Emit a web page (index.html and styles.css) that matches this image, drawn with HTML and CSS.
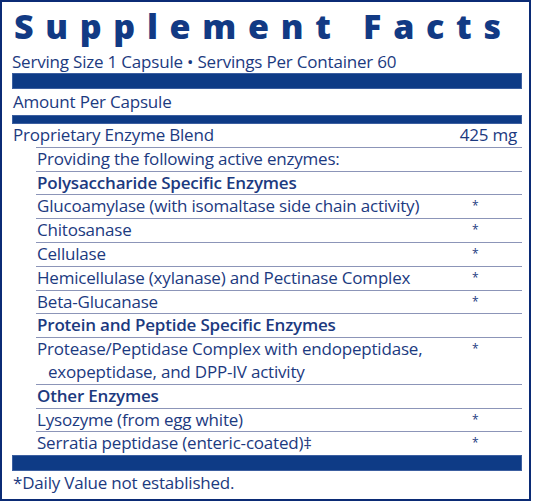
FILE: index.html
```html
<!DOCTYPE html>
<html>
<head>
    <meta charset="UTF-8">
    <title>Supplement Facts</title>
    <link rel="stylesheet" href="styles.css">
</head>
<body>
    <div class="label">
        <h1 class="title">Supplement Facts</h1>
        <p class="serving">Serving Size 1 Capsule • Servings Per Container 60</p>
        <div class="bar thick"></div>
        <p class="amount">Amount Per Capsule</p>
        <div class="bar thin"></div>

        <div class="row">
            <span class="name">Proprietary Enzyme Blend</span>
            <span class="val">425 mg</span>
        </div>

        <div class="row sub">
            <span class="name">Providing the following active enzymes:</span>
        </div>
        <div class="row sub head">
            <span class="name">Polysaccharide Specific Enzymes</span>
        </div>
        <div class="row sub">
            <span class="name">Glucoamylase (with isomaltase side chain activity)</span>
            <span class="mark">*</span>
        </div>
        <div class="row sub">
            <span class="name">Chitosanase</span>
            <span class="mark">*</span>
        </div>
        <div class="row sub">
            <span class="name">Cellulase</span>
            <span class="mark">*</span>
        </div>
        <div class="row sub">
            <span class="name">Hemicellulase (xylanase) and Pectinase Complex</span>
            <span class="mark">*</span>
        </div>
        <div class="row sub">
            <span class="name">Beta-Glucanase</span>
            <span class="mark">*</span>
        </div>
        <div class="row sub head">
            <span class="name">Protein and Peptide Specific Enzymes</span>
        </div>
        <div class="row sub">
            <span class="name hang">Protease/Peptidase Complex with endopeptidase, exopeptidase, and DPP-IV activity</span>
            <span class="mark">*</span>
        </div>
        <div class="row sub head">
            <span class="name">Other Enzymes</span>
        </div>
        <div class="row sub">
            <span class="name">Lysozyme (from egg white)</span>
            <span class="mark">*</span>
        </div>
        <div class="row sub">
            <span class="name">Serratia peptidase (enteric-coated)‡</span>
            <span class="mark">*</span>
        </div>

        <div class="bar thick"></div>
        <p class="note">*Daily Value not established.</p>
    </div>
</body>
</html>
```

FILE: styles.css
```css
body {
    margin: 0;
    background: #fff;
    font-family: 'Open Sans', 'Liberation Sans', sans-serif;
    color: #1c3a7f;
}
.label {
    box-sizing: border-box;
    width: 531px;
    height: 501px;
    border: 2px solid #0b2b75;
    padding: 6px 7px 0 10px;
}
.title {
    margin: 0;
    font-size: 34px;
    line-height: 36px;
    font-weight: 800;
    letter-spacing: 11.7px;
    color: #123a84;
    padding-left: 2px;
    white-space: nowrap;
}
.serving {
    margin: 7px 0 0 0;
    font-size: 17px;
    line-height: 22px;
    letter-spacing: -0.2px;
}
.bar {
    background: #0e3b86;
    border: 1px solid #3c5fa0;
    box-sizing: border-box;
}
.thick {
    height: 16px;
}
.thin {
    height: 9px;
}
.amount {
    margin: 0;
    font-size: 17px;
    line-height: 26px;
    letter-spacing: -0.2px;
    padding-left: 1px;
}
.row {
    display: flex;
    font-size: 17px;
    line-height: 22.8px;
    letter-spacing: -0.2px;
    padding-left: 1px;
}
.row .name {
    flex: 1;
}
.row .val {
    padding-right: 5px;
}
.sub {
    margin-left: 24px;
    border-top: 1px solid #8c95b8;
}
.head {
    font-weight: 600;
}
.hang {
    padding-left: 11px;
    text-indent: -11px;
}
.mark {
    width: 50px;
    font-size: 12px;
}
.note {
    margin: 0;
    font-size: 17px;
    line-height: 24px;
    letter-spacing: -0.2px;
    padding-left: 1px;
}
```
